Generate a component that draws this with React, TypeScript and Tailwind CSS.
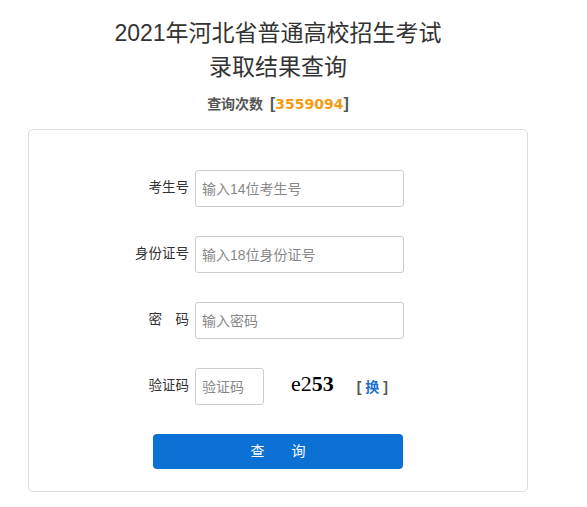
export default function App() {
  const rows = [
    { label: "考生号", placeholder: "输入14位考生号" },
    { label: "身份证号", placeholder: "输入18位身份证号" },
    { label: "密　码", placeholder: "输入密码" },
  ];

  return (
    <div className="w-[556px] bg-white text-[#333] font-['Liberation_Sans','Noto_Sans_CJK_SC',sans-serif]">
      {/* TITLE */}
      <div className="pt-[16px] text-center text-[23px] leading-[34px] text-[#333]">
        <p>2021年河北省普通高校招生考试</p>
        <p>录取结果查询</p>
      </div>

      {/* COUNTER */}
      <p className="mt-[10px] text-center text-[14px] leading-[20px] font-bold text-[#555]">
        查询次数 <span className="ml-[3px] text-[16px]">[</span>
        <span className="text-[#f39c12] font-['DejaVu_Sans',sans-serif]">3559094</span>
        <span className="text-[16px]">]</span>
      </p>

      {/* FORM CARD */}
      <div className="mx-[28px] mt-[15px] rounded-[5px] border border-[#ddd] pt-[40px] pb-[22px]">
        <div className="flex flex-col gap-[29px]">
          {rows.map((r) => (
            <div key={r.label} className="flex items-center">
              <label className="w-[166px] pr-[6px] text-right text-[13.5px] text-[#333]">
                {r.label}
              </label>
              <input
                placeholder={r.placeholder}
                className="h-[37px] w-[209px] rounded-[3px] border border-[#ccc] px-[6px] text-[14px] outline-none placeholder:text-[#888]"
              />
            </div>
          ))}

          {/* CAPTCHA */}
          <div className="flex items-center">
            <label className="w-[166px] pr-[6px] text-right text-[13.5px] text-[#333]">
              验证码
            </label>
            <input
              placeholder="验证码"
              className="h-[37px] w-[69px] rounded-[3px] border border-[#ccc] px-[6px] text-[14px] outline-none placeholder:text-[#888]"
            />
            <span className="ml-[27px] mb-[6px] font-['Liberation_Serif',serif] text-[22px] leading-none text-black">
              e2<span className="font-bold">53</span>
            </span>
            <span className="ml-[23px] mt-[2px] text-[14px] font-bold text-[#555]">
              [ <span className="text-[#1a6ed0]">换</span> ]
            </span>
          </div>
        </div>

        {/* SUBMIT */}
        <div className="mt-[29px] pl-[124px]">
          <button className="h-[35px] w-[250px] rounded-[4px] bg-[#0c71d5] text-[14px] text-white">
            查&nbsp;&nbsp;&nbsp;&nbsp;&nbsp;&nbsp;&nbsp;询
          </button>
        </div>
      </div>
    </div>
  );
}
